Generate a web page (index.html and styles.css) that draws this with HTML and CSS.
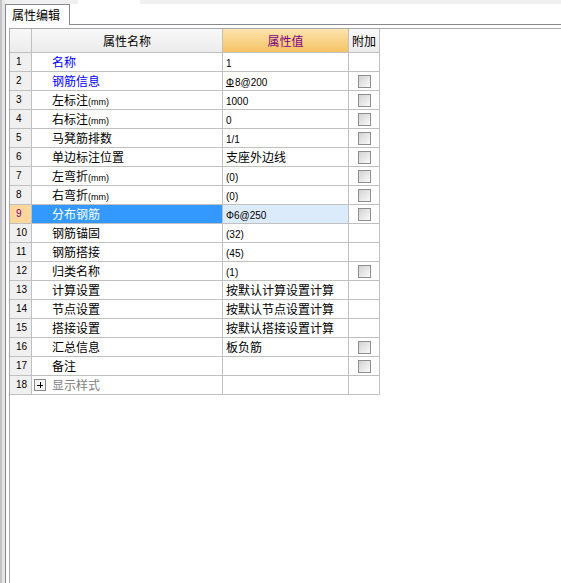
FILE: index.html
```html
<!DOCTYPE html>
<html lang="zh-CN">
<head>
<meta charset="utf-8">
<title>属性编辑</title>
<link rel="stylesheet" href="styles.css">
</head>
<body>
<div class="edge"></div>
<div class="area">
  <div class="topbar"><div class="tb-gray tb-left"></div><div class="tb-white"></div><div class="tb-gray tb-grow"></div></div>
  <div class="tabrow"><div class="tab">属性编辑</div><div class="tabfill"></div></div>
  <div class="panel">
    <div class="inner">
      <div class="grid">
        <div class="h h-gray"></div>
        <div class="h h-gray">属性名称</div>
        <div class="h h-val">属性值</div>
        <div class="h h-gray">附加</div>

        <div class="c rn">1</div><div class="c name blue">名称</div><div class="c val"><span class="lat">1</span></div><div class="c att"></div>
        <div class="c rn">2</div><div class="c name blue">钢筋信息</div><div class="c val"><span class="lat"><span class="phi2">Φ</span>8@200</span></div><div class="c att"><span class="cb"></span></div>
        <div class="c rn">3</div><div class="c name">左标注<span class="mm">(mm)</span></div><div class="c val"><span class="lat">1000</span></div><div class="c att"><span class="cb"></span></div>
        <div class="c rn">4</div><div class="c name">右标注<span class="mm">(mm)</span></div><div class="c val"><span class="lat">0</span></div><div class="c att"><span class="cb"></span></div>
        <div class="c rn">5</div><div class="c name">马凳筋排数</div><div class="c val"><span class="lat">1/1</span></div><div class="c att"><span class="cb"></span></div>
        <div class="c rn">6</div><div class="c name">单边标注位置</div><div class="c val">支座外边线</div><div class="c att"><span class="cb"></span></div>
        <div class="c rn">7</div><div class="c name">左弯折<span class="mm">(mm)</span></div><div class="c val"><span class="lat">(0)</span></div><div class="c att"><span class="cb"></span></div>
        <div class="c rn">8</div><div class="c name">右弯折<span class="mm">(mm)</span></div><div class="c val"><span class="lat">(0)</span></div><div class="c att"><span class="cb"></span></div>
        <div class="c rn sel">9</div><div class="c name sel">分布钢筋</div><div class="c val sel"><span class="lat">Φ6@250</span></div><div class="c att"><span class="cb"></span></div>
        <div class="c rn">10</div><div class="c name">钢筋锚固</div><div class="c val"><span class="lat">(32)</span></div><div class="c att"></div>
        <div class="c rn">11</div><div class="c name">钢筋搭接</div><div class="c val"><span class="lat">(45)</span></div><div class="c att"></div>
        <div class="c rn">12</div><div class="c name">归类名称</div><div class="c val"><span class="lat">(1)</span></div><div class="c att"><span class="cb"></span></div>
        <div class="c rn">13</div><div class="c name">计算设置</div><div class="c val">按默认计算设置计算</div><div class="c att"></div>
        <div class="c rn">14</div><div class="c name">节点设置</div><div class="c val">按默认节点设置计算</div><div class="c att"></div>
        <div class="c rn">15</div><div class="c name">搭接设置</div><div class="c val">按默认搭接设置计算</div><div class="c att"></div>
        <div class="c rn">16</div><div class="c name">汇总信息</div><div class="c val">板负筋</div><div class="c att"><span class="cb"></span></div>
        <div class="c rn">17</div><div class="c name">备注</div><div class="c val"></div><div class="c att"><span class="cb"></span></div>
        <div class="c rn">18</div><div class="c name group"><svg class="plus" width="12" height="12" viewBox="0 0 12 12"><rect x="0.5" y="0.5" width="11" height="11" fill="#f4f4f4" stroke="#8a8a8a"/><path d="M3 6h6M6 3v6" stroke="#000" stroke-width="1" shape-rendering="crispEdges"/></svg><span class="gtext">显示样式</span></div><div class="c val"></div><div class="c att"></div>
      </div>
    </div>
  </div>
</div>
</body>
</html>
```

FILE: styles.css
```css
html, body {
  margin: 0;
  padding: 0;
}
body {
  display: flex;
  height: 583px;
  background: #ffffff;
  font-family: "Noto Sans CJK SC", "Liberation Sans", sans-serif;
  font-size: 12px;
  color: #000000;
  overflow: hidden;
}
.edge {
  width: 5px;
  flex: 0 0 5px;
  background: linear-gradient(to right, #c4c4c4 0, #c4c4c4 2px, #e6e6e6 2px, #e6e6e6 5px);
}
.area {
  flex: 1;
  display: flex;
  flex-direction: column;
  min-width: 0;
}
.topbar {
  display: flex;
  height: 4px;
  flex: 0 0 4px;
}
.tb-gray { background: #f0f0f0; }
.tb-left { width: 73px; }
.tb-white { width: 62px; background: #ffffff; }
.tb-grow { flex: 1; }
.tabrow {
  display: flex;
  height: 21px;
  flex: 0 0 21px;
}
.tab {
  box-sizing: border-box;
  width: 65px;
  height: 21px;
  border: 1px solid #8a8990;
  border-bottom: none;
  background: #ffffff;
  padding-left: 6px;
  line-height: 19px;
  font-size: 12px;
  white-space: nowrap;
}
.tabfill {
  flex: 1;
  box-sizing: border-box;
  height: 21px;
  border-bottom: 1px solid #8a8990;
}
.panel {
  flex: 1;
  display: flex;
  flex-direction: column;
  border-left: 1px solid #8a8990;
  padding: 3px 0 0 3px;
}
.inner {
  flex: 1;
  border-left: 1px solid #a8a8a8;
  border-top: 1px solid #a8a8a8;
}
.grid {
  display: grid;
  width: max-content;
  grid-template-columns: 21px 190px 125px 30px;
  grid-template-rows: 23px;
  grid-auto-rows: 18px;
  gap: 1px;
  background: #c0c0c0;
  padding: 0 1px 1px 0;
}
.h {
  font-size: 12px;
  line-height: 23px;
  text-align: center;
  white-space: nowrap;
  overflow: hidden;
}
.h-gray {
  background: linear-gradient(#f8f8f8, #ececec);
}
.h-val {
  background: linear-gradient(#fde4ae, #f4c264);
  color: #800080;
}
.c {
  background: #ffffff;
  line-height: 18px;
  white-space: nowrap;
  overflow: hidden;
}
.rn {
  background: #f0f0f0;
  padding-left: 6px;
  font-family: "Liberation Sans", sans-serif;
  font-size: 10px;
}
.name {
  padding-left: 20px;
}
.blue { color: #0000ff; }
.val {
  padding-left: 3px;
}
.lat {
  font-family: "Liberation Sans", sans-serif;
  font-size: 10px;
}
.mm {
  font-family: "Liberation Sans", sans-serif;
  font-size: 9px;
}
.phi2 {
  text-decoration: underline;
  text-underline-offset: 0px;
  margin-right: 1px;
}
.att {
  display: flex;
  align-items: center;
  justify-content: center;
  padding-left: 1px;
}
.cb {
  box-sizing: border-box;
  width: 13px;
  height: 13px;
  border: 1px solid #8e8e8e;
  background: linear-gradient(135deg, #d2d2d2, #fafafa);
}
.rn.sel {
  background: #fcd79c;
  color: #800080;
}
.name.sel {
  background: #3399ff;
  color: #ffffff;
}
.val.sel {
  background: #dcebfb;
}
.group {
  display: flex;
  align-items: center;
  padding-left: 2px;
}
.plus {
  display: block;
  margin-right: 6px;
}
.gtext {
  color: #808080;
}
```
